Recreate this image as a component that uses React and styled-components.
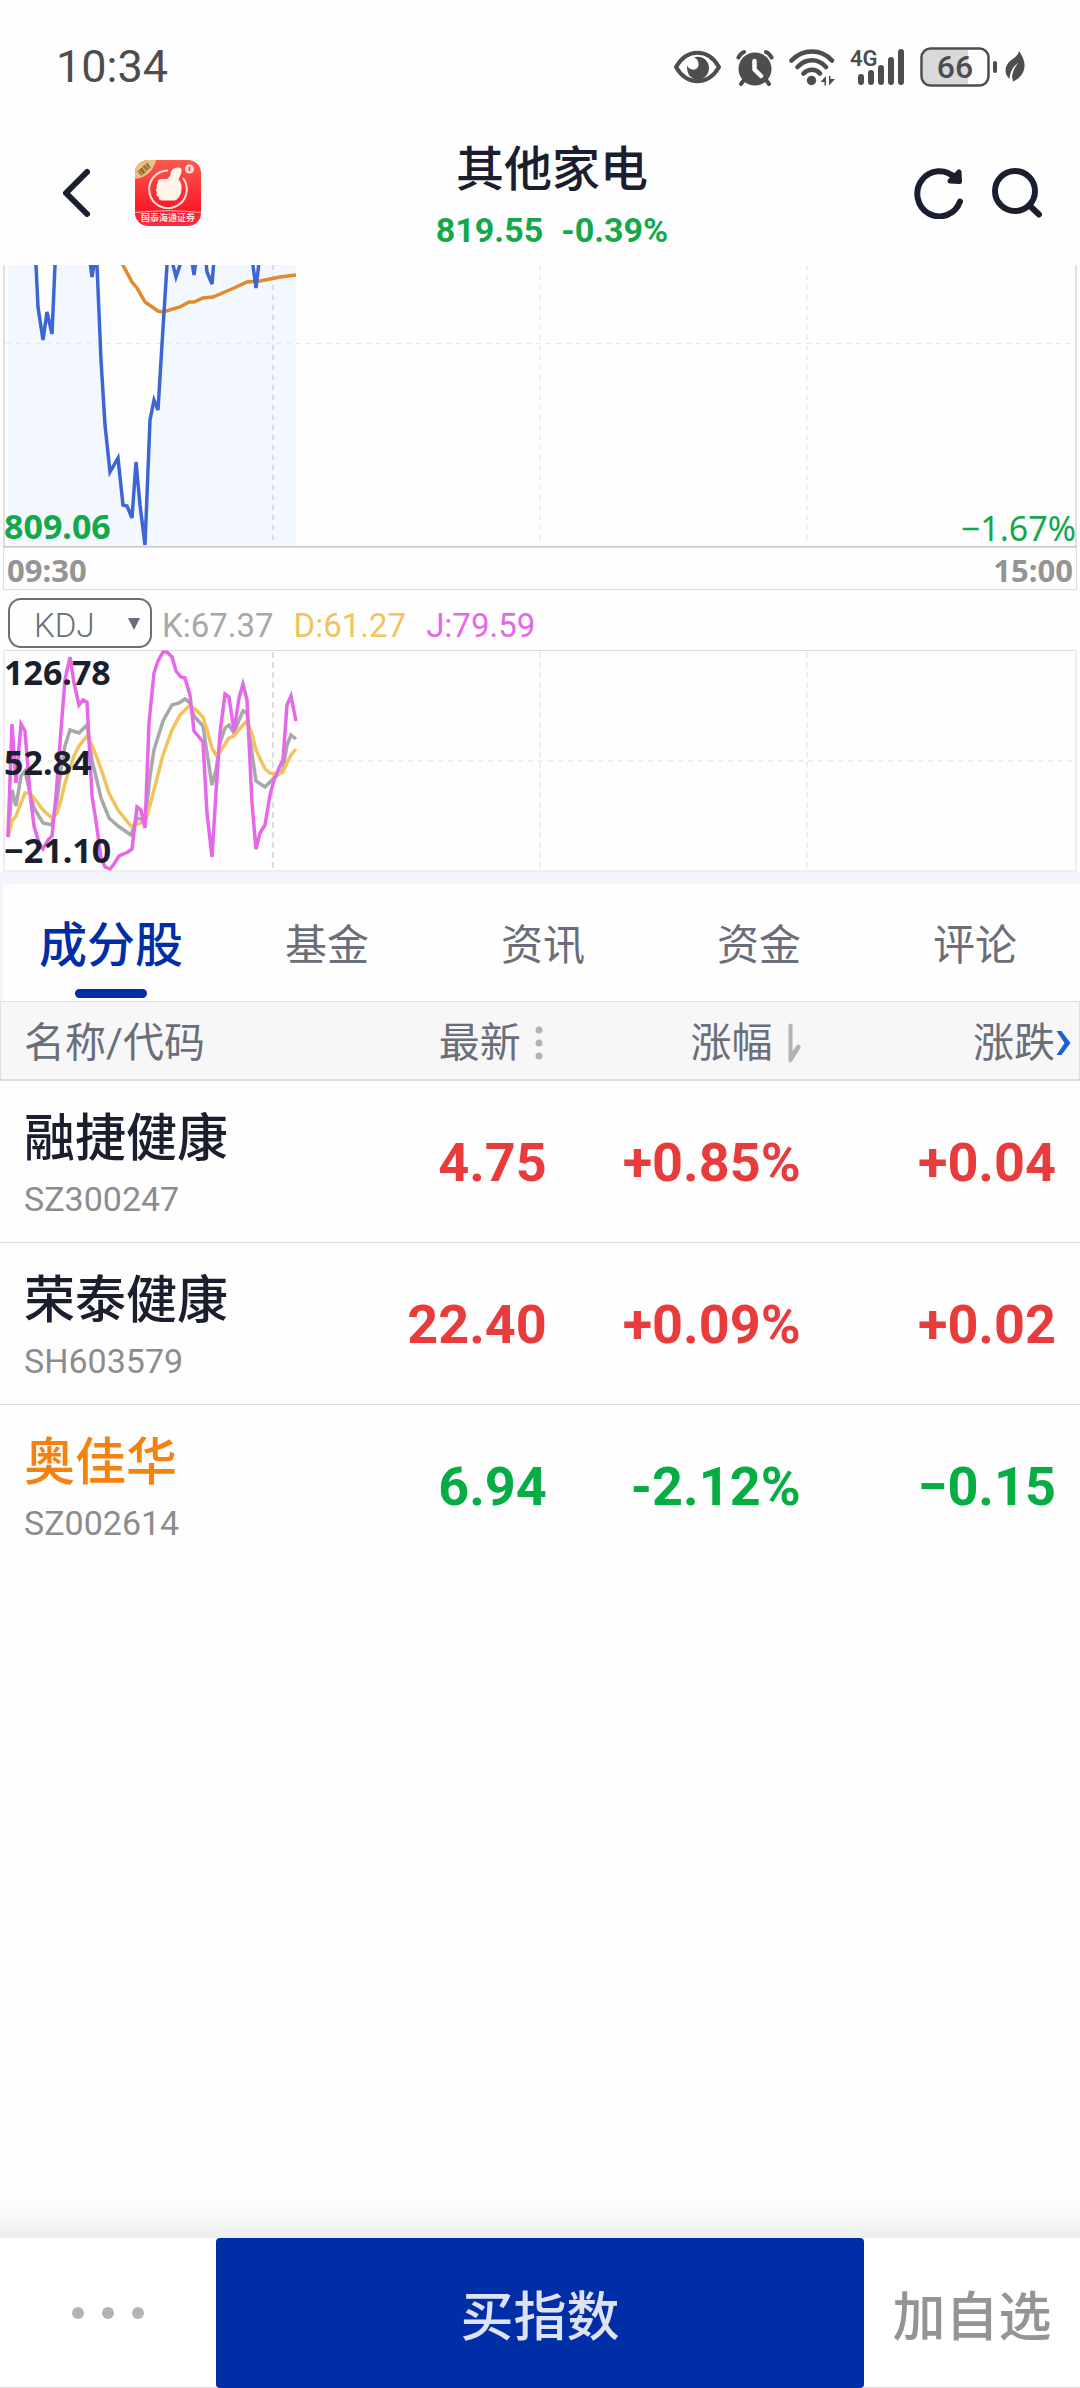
import React, { useState } from "react";
import styled, { createGlobalStyle } from "styled-components";

const colors = {
    ink: "#1b1e2e",
    grey: "#6b6e7a",
    soft: "#8c8c8c",
    line: "#dedede",
    blue: "#002ea6",
    up: "#e83c3c",
    down: "#06ad43",
    k: "#a8a8a8",
    d: "#f2c35c",
    j: "#e468e8",
};

const GlobalStyle = createGlobalStyle`
* {
    box-sizing: border-box;
}

body {
    margin: 0;
    background: #fefefe;
    color: ${colors.ink};
    font-family: Roboto, "Noto Sans CJK SC", sans-serif;
}

button, select {
    margin: 0;
    padding: 0;
    border: 0;
    background: none;
    color: inherit;
    font: inherit;
}

svg {
    display: block;
}
`;

const Page = styled.div`
display: flex;
flex-direction: column;
min-height: 100vh;
`;

const StatusBar = styled.div`
display: flex;
align-items: center;
justify-content: space-between;
height: 134px;
padding: 0 55px 0 56px;
color: #4d4d4d;
`;

const Clock = styled.span`
font-size: 45px;
line-height: 56px;
`;

const StatusIcons = styled.div`
display: flex;
align-items: center;
gap: ${(p) => (p.$tight ? "7px" : "15px")};
`;

const Header = styled.header`
display: grid;
grid-template-columns: 1fr auto 1fr;
align-items: center;
height: 131px;
padding: 0 38px 14px 62px;
`;

const HeaderSide = styled.div`
display: flex;
align-items: center;
justify-content: ${(p) => (p.$end ? "flex-end" : "flex-start")};
gap: ${(p) => (p.$end ? "28px" : "45px")};
`;

const TitleBlock = styled.div`
padding-top: 6px;
text-align: center;

h1 {
    margin: 0 0 12px;
    font-size: 48px;
    font-weight: 500;
    line-height: 56px;
}
`;

const Quote = styled.div`
display: flex;
justify-content: center;
gap: 18px;
color: #12a84b;
font-size: 34px;
font-weight: 700;
line-height: 40px;
`;

const ChartBox = styled.div`
position: relative;
height: ${(p) => p.$height}px;

svg {
    width: 100%;
    height: 100%;
}
`;

const ChartLabel = styled.span`
position: absolute;
left: ${(p) => (p.$right ? "auto" : "4px")};
right: ${(p) => (p.$right ? "4px" : "auto")};
top: ${(p) => p.$top};
bottom: ${(p) => p.$bottom};
color: ${(p) => p.$color || colors.ink};
font-family: "Noto Sans", sans-serif;
font-size: 34px;
font-weight: ${(p) => (p.$right ? 400 : 700)};
line-height: 36px;
`;

const TimeAxis = styled.div`
display: flex;
align-items: center;
justify-content: space-between;
height: 43px;
margin: 0 3px;
padding: 2px 3px 0;
border: 1px solid ${colors.line};
color: #949494;
font-family: "Noto Sans", sans-serif;
font-size: 31px;
font-weight: 700;
line-height: 36px;
`;

const IndicatorBar = styled.div`
display: flex;
align-items: flex-end;
gap: 20px;
height: 60px;
padding: 0 8px 2px;
font-size: 33px;
line-height: 44px;
`;

const SelectWrap = styled.label`
position: relative;
margin-right: -10px;

select {
    display: block;
    appearance: none;
    width: 144px;
    height: 50px;
    padding: 4px 0 0 24px;
    border: 2px solid ${colors.grey};
    border-radius: 13px;
    color: ${colors.grey};
    font-weight: 300;
}

svg {
    position: absolute;
    right: 12px;
    top: 20px;
    pointer-events: none;
}
`;

const IndicatorValue = styled.span`
color: ${(p) => p.$color};
`;

const Tabs = styled.nav`
display: flex;
height: 129px;
border-top: 12px solid #f3f5fa;
border-left: 3px solid #f3f5fa;
overflow: hidden;
`;

const Tab = styled.button`
display: flex;
flex: 0 0 20vw;
flex-direction: column;
align-items: center;
justify-content: flex-end;
gap: 15px;
padding-bottom: 3px;
color: ${(p) => (p.$active ? colors.blue : colors.grey)};
font-size: ${(p) => (p.$active ? 48 : 42)}px;
font-weight: ${(p) => (p.$active ? 500 : 400)};
line-height: 56px;
cursor: pointer;

&::after {
    content: "";
    width: 72px;
    height: 9px;
    border-radius: 5px;
    background: ${(p) => (p.$active ? colors.blue : "transparent")};
}
`;

const Table = styled.table`
width: 100%;
table-layout: fixed;
border-collapse: separate;
border-spacing: 0;
`;

const Th = styled.th`
width: ${(p) => p.$width};
height: 80px;
padding: 4px ${(p) => p.$pad || 4}px 0 ${(p) => (p.$first ? 23 : 0)}px;
border-top: 1px solid ${colors.line};
border-bottom: 2px solid ${colors.line};
border-left: ${(p) => (p.$first ? `1px solid ${colors.line}` : 0)};
border-right: ${(p) => (p.$last ? `1px solid ${colors.line}` : 0)};
background: #f7f7f7;
color: ${colors.grey};
font-size: 41px;
font-weight: 400;
line-height: 56px;
text-align: ${(p) => (p.$first ? "left" : "right")};
white-space: nowrap;
`;

const SortButton = styled.button`
position: relative;
display: inline-flex;
align-items: center;
gap: 14px;
cursor: pointer;
`;

const MoreArrow = styled.span`
position: absolute;
right: -16px;
`;

const Td = styled.td`
height: 162px;
padding: 2px ${(p) => (p.$last ? 24 : 4)}px 0 0;
border-bottom: 1px solid ${colors.line};
color: ${(p) => p.$color};
font-size: 54px;
font-weight: 700;
line-height: 64px;
text-align: right;
white-space: nowrap;

tr:last-child > & {
    border-bottom-color: transparent;
}
`;

const NameCell = styled(Td)`
padding: 6px 0 0 24px;
text-align: left;
`;

const StockName = styled.div`
color: ${(p) => p.$color};
font-size: 51px;
font-weight: 500;
line-height: 68px;
`;

const StockCode = styled.div`
color: ${colors.soft};
font-size: 34px;
font-weight: 400;
line-height: 52px;
`;

const BottomShade = styled.div`
height: 48px;
margin-top: auto;
background: linear-gradient(to bottom, #fefefe 0%, #f9f9f9 55%, #ededed 100%);
`;

const BottomBar = styled.footer`
display: grid;
grid-template-columns: 1fr 3fr 1fr;
height: 150px;
background: #ffffff;
`;

const BarButton = styled.button`
display: flex;
align-items: center;
justify-content: center;
gap: 18px;
padding-top: ${(p) => (p.$dots ? 0 : 10)}px;
border-bottom: 1px solid ${(p) => (p.$primary ? colors.blue : colors.line)};
border-radius: ${(p) => (p.$primary ? "4px" : "0")};
background: ${(p) => (p.$primary ? colors.blue : "transparent")};
color: ${(p) => (p.$primary ? "#dde1f0" : "#949494")};
font-size: 53px;
font-weight: 500;
line-height: 64px;
white-space: nowrap;
cursor: pointer;
`;

const Dot = styled.span`
width: 12px;
height: 12px;
border-radius: 50%;
background: #b3b3b3;
`;

const PlainButton = styled.button`
cursor: pointer;
`;

/* ---------- icons ---------- */

const EyeIcon = () => (
    <svg width="47" height="34" viewBox="0 0 47 34">
        <path d="M2 17C13 -2 34 -2 45 17C34 36 13 36 2 17Z" fill="none" stroke="#4d4d4d" strokeWidth="4" strokeLinejoin="round" />
        <path d="M20 7.500C27 5 35 10 35 18C35 25 29.500 29.500 24 29.500C17 29.500 12.500 24 13 15.500C15 21 25 21.500 24.500 14C24.500 11 23 8.500 20 7.500Z" fill="#4d4d4d" />
    </svg>
);

const AlarmIcon = () => (
    <svg width="38" height="37" viewBox="0 0 38 37">
        <circle cx="19" cy="20" r="16.500" fill="#4d4d4d" />
        <path d="M2.500 8.500Q4.500 4.500 8 3M35.500 8.500Q33.500 4.500 30 3M8 31L5 35M30 31L33 35" fill="none" stroke="#4d4d4d" strokeWidth="4" strokeLinecap="round" />
        <path d="M18.500 12V20.500L25 27" fill="none" stroke="#fff" strokeWidth="4.500" strokeLinecap="round" strokeLinejoin="round" />
    </svg>
);

const WifiIcon = () => (
    <svg width="46" height="38" viewBox="0 0 46 38">
        <g fill="none" stroke="#4d4d4d" strokeWidth="4.600" strokeLinecap="round">
            <path d="M2.500 12.500C14 0.500 32 0.500 43 12.500" />
            <path d="M8.500 19C17 10 29 10 37 19" />
            <path d="M14.500 25.500C19 20.500 27 20.500 31 25.500" />
        </g>
        <circle cx="22.500" cy="32.500" r="4.700" fill="#4d4d4d" />
        <path d="M31.500 34L37 28V37.500H35.500V34ZM46 31L40 37.500V28H41.500V31Z" fill="#4d4d4d" />
    </svg>
);

const SignalIcon = () => (
    <svg width="55" height="50" viewBox="0 -6 55 50">
        <text x="0" y="18" fontFamily="Roboto, sans-serif" fontSize="22" fontWeight="600" fill="#4d4d4d">4G</text>
        <g stroke="#4d4d4d" strokeWidth="6" strokeLinecap="round">
            <path d="M11 29V34M21 25V34M31 20V34M41 12V34M51 4V34" />
        </g>
    </svg>
);

const BatteryIcon = () => (
    <svg width="78" height="40" viewBox="0 0 78 40">
        <rect x="1.500" y="1.500" width="67" height="37" rx="9" fill="#fefefe" />
        <path d="M10 3H48V37H10Q3 37 3 30V10Q3 3 10 3Z" fill="#d9d9d9" />
        <rect x="1.500" y="1.500" width="67" height="37" rx="9" fill="none" stroke="#4d4d4d" strokeWidth="2.500" />
        <rect x="73" y="14" width="4" height="12" rx="2" fill="#4d4d4d" />
        <text x="35" y="31" textAnchor="middle" fontFamily="Roboto, sans-serif" fontSize="32" fontWeight="500" fill="#4d4d4d">66</text>
    </svg>
);

const LeafIcon = () => (
    <svg width="20" height="32" viewBox="0 0 20 32">
        <path d="M14 0C19 7 21 14 18.500 20C16.500 25.500 12 29 8 30.500L7 26C7.500 21 9.500 16.500 13 12C8 15.500 5 21 4.500 28C-1.500 23 0 14 5 10C9 7 13 5 14 0Z" fill="#4d4d4d" />
    </svg>
);

const BackIcon = () => (
    <svg width="28" height="50" viewBox="0 0 28 50">
        <path d="M25 4L4 25L25 46" fill="none" stroke={colors.ink} strokeWidth="6" strokeLinecap="round" strokeLinejoin="round" />
    </svg>
);

const BrandLogo = () => (
    <svg width="66" height="66" viewBox="0 0 66 66">
        <defs>
            <linearGradient id="brandRed" x1="0" y1="0" x2="0" y2="1">
                <stop offset="0" stopColor="#fb5a4c" />
                <stop offset="0.75" stopColor="#fb1a2a" />
                <stop offset="1" stopColor="#f72f42" />
            </linearGradient>
            <clipPath id="brandClip">
                <rect width="66" height="66" rx="13" />
            </clipPath>
        </defs>
        <g clipPath="url(#brandClip)">
            <rect width="66" height="66" fill="url(#brandRed)" />
            <path d="M0 0H21C19 10 11 18 0 19Z" fill="#e8c282" />
            <path d="M33 10.500A18.800 18.800 0 1 0 48 18" fill="none" stroke="#ffe3dc" strokeWidth="2" />
            <path d="M44 7.500Q48 8 46 14Q44 18 43.500 19.500Q47 23 46.500 29Q46 38 40 40.500H27Q23 40 24 37Q20 36 22 32.500Q20 30 22 27.500Q20.500 24.500 23 23Q22 19.500 26 19H32Q35.500 17 36 12Q37 7.500 44 7.500Z" fill="#fff4ea" />
            <circle cx="54.500" cy="9" r="4.500" fill="#ffe0da" />
            <path d="M54.500 6.500V11.500" stroke="#f25549" strokeWidth="1.800" />
            <path d="M0 52.500Q33 49 66 52.500" fill="none" stroke="#ffb3b0" strokeWidth="1.200" />
        </g>
        <text x="9" y="12" textAnchor="middle" transform="rotate(-42 9 9)" fontFamily="Noto Sans CJK SC, sans-serif" fontSize="7" fontWeight="700" fill="#8a5a22">理财</text>
        <text x="33" y="61" textAnchor="middle" fontFamily="Noto Sans CJK SC, sans-serif" fontSize="9" fontWeight="700" fill="#ffdcd9">国泰海通证券</text>
    </svg>
);

const RefreshIcon = () => (
    <svg width="50" height="52" viewBox="0 0 50 52">
        <path d="M41 11A22 22.500 0 1 0 46 34.500" fill="none" stroke={colors.ink} strokeWidth="6" strokeLinecap="round" />
        <path d="M45 5L45.500 14.500L36 14Z" fill={colors.ink} stroke={colors.ink} strokeWidth="5" strokeLinejoin="round" />
    </svg>
);

const SearchIcon = () => (
    <svg width="50" height="50" viewBox="0 0 50 50">
        <circle cx="23" cy="23" r="20" fill="none" stroke={colors.ink} strokeWidth="6" />
        <path d="M38 38L47 46.500" stroke={colors.ink} strokeWidth="6" strokeLinecap="round" />
    </svg>
);

const DotsSortIcon = () => (
    <svg width="8" height="34" viewBox="0 0 8 34" fill="#b3b3b3">
        <circle cx="4" cy="4" r="3.500" />
        <circle cx="4" cy="17" r="3.500" />
        <circle cx="4" cy="30" r="3.500" />
    </svg>
);

const DownSortIcon = () => (
    <svg width="14" height="42" viewBox="0 0 14 42">
        <path d="M1.500 3Q3.500 0 5.500 3V29L10 23Q14 22 13.500 26L5 39.500Q1.500 42 1.500 38Z" fill="#b3b3b3" />
    </svg>
);

/* ---------- chart data, x runs over the trading day ---------- */

const GRID_X = [273, 540, 807];

const priceLine =
    "8,-40 34,-30 36,0 38,42 43,75 47,47 52,69 55,0 57,-30 88,-30 90,-4 92,12 95,-6 97,0 101,95 105,160 110,207 118,193 " +
    "123,240 127,241 132,253 136,197 140,240 145,280 150,155 154,135 158,145 163,63 167,0 168,-20 171,-8 " +
    "176,12 184,-12 190,-16 194,10 198,-20 205,-14 207,7 212,19 215,-18 250,-22 256,23 261,-20 296,-40";

const averageLine =
    "118,-9 132,17 137,23 145,37 158,46 163,47 180,42 189,37 194,37 203,33 213,32 227,26 234,23 247,17 260,16 280,12 296,10";

const jLine =
    "8,187 12,74 16,133 21,74 25,81 30,143 34,176 39,193 43,199 48,190 52,186 56,146 61,80 65,30 70,7 74,33 79,55 83,50 " +
    "87,52 92,146 96,171 101,208 105,217 110,219 114,214 119,206 128,202 132,199 137,157 141,160 145,178 149,73 154,23 " +
    "158,11 163,2 167,2 172,7 176,21 181,27 185,28 190,45 194,81 199,87 203,92 207,163 212,207 216,143 220,83 225,44 " +
    "229,47 234,81 239,48 243,34 247,50 252,153 256,199 260,183 265,175 270,145 274,130 279,118 283,110 287,55 291,46 296,71";

const kLine =
    "8,187 12,140 16,156 21,126 25,121 30,143 34,158 43,173 52,175 57,150 61,120 65,96 70,80 79,83 87,75 92,110 101,148 " +
    "109,168 118,176 131,185 137,168 141,169 145,173 150,126 154,100 163,71 172,55 179,53 185,49 189,52 194,66 203,76 " +
    "207,103 212,135 216,120 220,93 225,78 229,75 234,83 239,70 243,61 247,63 252,103 256,131 265,137 274,128 283,120 " +
    "287,95 291,85 296,89";

const dLine =
    "8,187 12,171 16,166 21,153 25,143 30,143 34,148 43,160 52,168 57,163 61,150 65,133 74,106 79,96 87,86 92,95 100,116 " +
    "109,143 118,160 131,176 141,173 146,170 154,140 163,105 172,80 180,65 189,56 195,59 203,67 207,80 212,98 216,105 " +
    "220,102 229,88 234,86 243,75 247,71 252,84 256,100 265,119 270,123 279,124 283,122 287,113 291,105 296,99";

const PriceChart = () => (
    <ChartBox $height={282}>
        <svg viewBox="0 0 1080 282" preserveAspectRatio="none">
            <polygon points={`8,282 ${priceLine} 296,282`} fill="#f2f8fd" />
            <path d="M6 78.500H1076" stroke="#e8e8e8" strokeDasharray="5 5" />
            {GRID_X.map((x, i) => (
                <path key={x} d={`M${x} 0V280`} stroke={i === 0 ? "#d9dde0" : "#efefef"} strokeWidth="2" strokeDasharray="5 5" />
            ))}
            <path d="M4 0V282M1076 0V282" stroke="#e0e0e0" strokeWidth="2" />
            <path d="M3 281.500H1077" stroke="#c8c8c8" />
            <polyline points={averageLine} fill="none" stroke="#e08a2c" strokeWidth="3.500" />
            <polyline points={priceLine} fill="none" stroke="#3c66d2" strokeWidth="3.500" />
        </svg>
        <ChartLabel $bottom="3px" $color="#12a84b">809.06</ChartLabel>
        <ChartLabel $right $bottom="1px" $color="#12a84b">−1.67%</ChartLabel>
    </ChartBox>
);

const KdjChart = () => (
    <ChartBox $height={222}>
        <svg viewBox="0 0 1080 222" preserveAspectRatio="none">
            <path d="M8 111H1072" stroke="#ececec" strokeWidth="2" strokeDasharray="5 5" />
            {GRID_X.map((x, i) => (
                <path key={x} d={`M${x} 2V220`} stroke={i === 0 ? "#dedede" : "#efefef"} strokeWidth="2" strokeDasharray="6 4" />
            ))}
            <path d="M3 0.500H1077" stroke={colors.line} />
            <path d="M4 0V221H1076V0" fill="none" stroke="#efefef" strokeWidth="2" />
            <polyline points={kLine} fill="none" stroke={colors.k} strokeWidth="3.500" />
            <polyline points={dLine} fill="none" stroke={colors.d} strokeWidth="3.500" />
            <polyline points={jLine} fill="none" stroke={colors.j} strokeWidth="3.500" />
        </svg>
        <ChartLabel $top="4px">126.78</ChartLabel>
        <ChartLabel $top="94px">52.84</ChartLabel>
        <ChartLabel $bottom="4px">−21.10</ChartLabel>
    </ChartBox>
);

const tabs = ["成分股", "基金", "资讯", "资金", "评论"];

const stocks = [
    { name: "融捷健康", code: "SZ300247", price: "4.75", rate: "+0.85%", change: "+0.04", color: colors.up },
    { name: "荣泰健康", code: "SH603579", price: "22.40", rate: "+0.09%", change: "+0.02", color: colors.up },
    { name: "奥佳华", code: "SZ002614", price: "6.94", rate: "-2.12%", change: "−0.15", color: colors.down, nameColor: "#f5820f" },
];

export default function App() {
    const [active, setActive] = useState("成分股");

    return (
        <React.Fragment>
            <GlobalStyle />
            <Page>
                <StatusBar>
                    <Clock>10:34</Clock>
                    <StatusIcons>
                        <EyeIcon />
                        <AlarmIcon />
                        <WifiIcon />
                        <SignalIcon />
                        <StatusIcons $tight>
                            <BatteryIcon />
                            <LeafIcon />
                        </StatusIcons>
                    </StatusIcons>
                </StatusBar>
                <Header>
                    <HeaderSide>
                        <PlainButton aria-label="返回"><BackIcon /></PlainButton>
                        <BrandLogo />
                    </HeaderSide>
                    <TitleBlock>
                        <h1>其他家电</h1>
                        <Quote>
                            <span>819.55</span>
                            <span>-0.39%</span>
                        </Quote>
                    </TitleBlock>
                    <HeaderSide $end>
                        <PlainButton aria-label="刷新"><RefreshIcon /></PlainButton>
                        <PlainButton aria-label="搜索"><SearchIcon /></PlainButton>
                    </HeaderSide>
                </Header>

                <PriceChart />
                <TimeAxis>
                    <span>09:30</span>
                    <span>15:00</span>
                </TimeAxis>
                <IndicatorBar>
                    <SelectWrap>
                        <select aria-label="指标" defaultValue="KDJ">
                            <option>KDJ</option>
                        </select>
                        <svg width="12" height="12" viewBox="0 0 12 12">
                            <path d="M0 0H12L6 12Z" fill={colors.grey} />
                        </svg>
                    </SelectWrap>
                    <IndicatorValue $color={colors.k}>K:67.37</IndicatorValue>
                    <IndicatorValue $color={colors.d}>D:61.27</IndicatorValue>
                    <IndicatorValue $color={colors.j}>J:79.59</IndicatorValue>
                </IndicatorBar>
                <KdjChart />

                <Tabs>
                    {tabs.map((tab) => (
                        <Tab key={tab} $active={tab === active} onClick={() => setActive(tab)}>{tab}</Tab>
                    ))}
                </Tabs>
                <Table>
                    <thead>
                        <tr>
                            <Th $first $width="34%">名称/代码</Th>
                            <Th $width="17%" $pad={8}><SortButton>最新<DotsSortIcon /></SortButton></Th>
                            <Th $width="23.5%"><SortButton>涨幅<DownSortIcon /></SortButton></Th>
                            <Th $last $pad={24}>
                                <SortButton>
                                    涨跌
                                    <MoreArrow>
                                        <svg width="16" height="26" viewBox="0 0 16 26">
                                            <path d="M1.500 1H6.500L15.500 13L6.500 25H1.500L9.500 13Z" fill="#1c62d0" />
                                        </svg>
                                    </MoreArrow>
                                </SortButton>
                            </Th>
                        </tr>
                    </thead>
                    <tbody>
                        {stocks.map((s) => (
                            <tr key={s.code}>
                                <NameCell>
                                    <StockName $color={s.nameColor || colors.ink}>{s.name}</StockName>
                                    <StockCode>{s.code}</StockCode>
                                </NameCell>
                                <Td $color={s.color}>{s.price}</Td>
                                <Td $color={s.color}>{s.rate}</Td>
                                <Td $last $color={s.color}>{s.change}</Td>
                            </tr>
                        ))}
                    </tbody>
                </Table>

                <BottomShade />
                <BottomBar>
                    <BarButton $dots aria-label="更多"><Dot /><Dot /><Dot /></BarButton>
                    <BarButton $primary>买指数</BarButton>
                    <BarButton>加自选</BarButton>
                </BottomBar>
            </Page>
        </React.Fragment>
    );
}
